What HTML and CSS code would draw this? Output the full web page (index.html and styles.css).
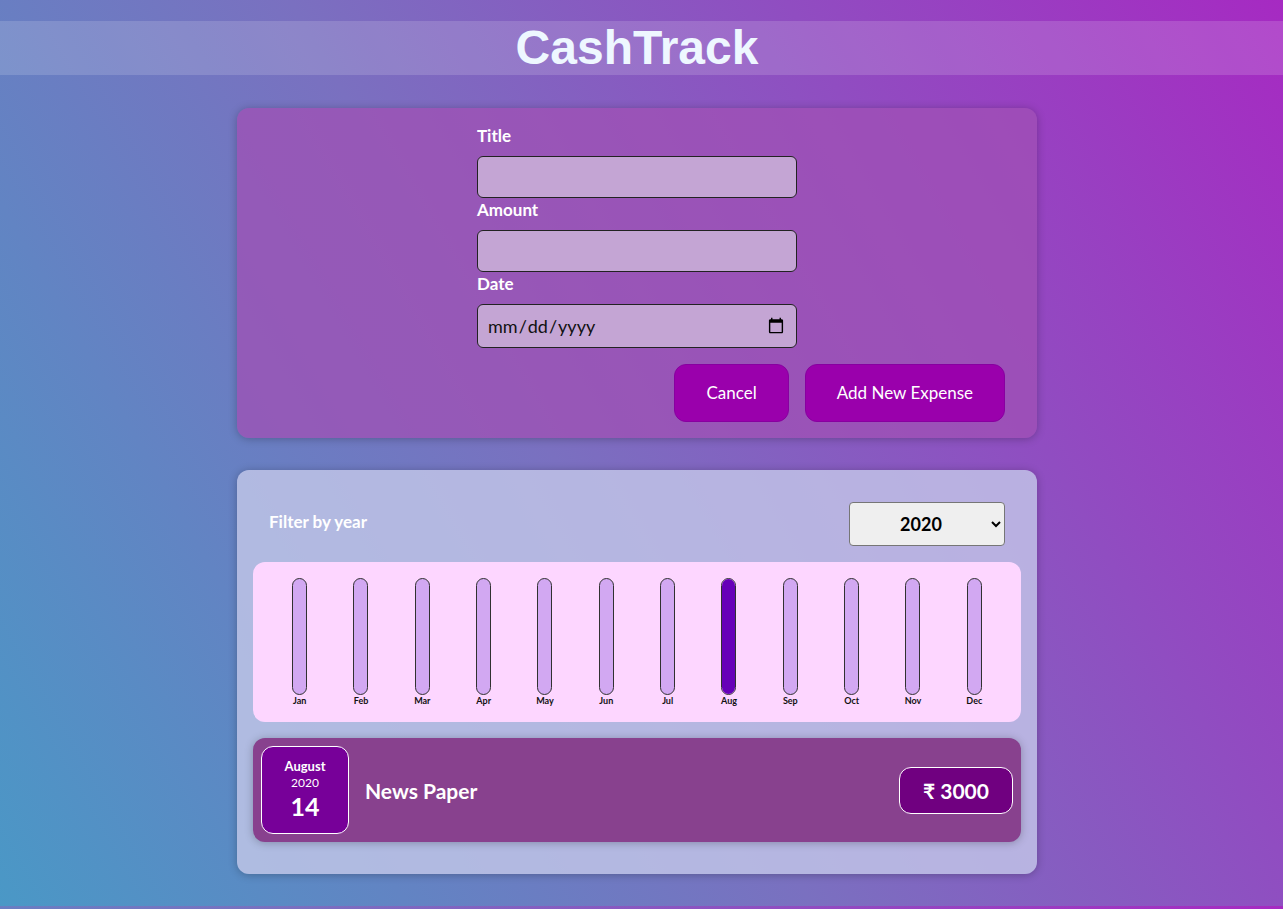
FILE: index.html
```html
<!DOCTYPE html>
<html lang="en">
<head>
<meta charset="utf-8">
<title>CashTrack</title>
<link rel="stylesheet" href="styles.css">
</head>
<body>
<header class="header">
  <h1 class="brand">CashTrack</h1>
</header>
<main class="main">
  <section class="card new-expense">
    <form class="expense-form">
      <div class="controls">
        <div class="control">
          <label class="label">Title</label>
          <input class="field" type="text">
        </div>
        <div class="control">
          <label class="label">Amount</label>
          <input class="field" type="number">
        </div>
        <div class="control">
          <label class="label">Date</label>
          <input class="field field-date" type="date">
        </div>
      </div>
      <div class="actions">
        <button type="button" class="btn">Cancel</button>
        <button type="button" class="btn">Add New Expense</button>
      </div>
    </form>
  </section>

  <section class="card expenses">
    <div class="filter">
      <span class="filter-label">Filter by year</span>
      <select class="filter-select">
        <option>2020</option>
        <option>2021</option>
        <option>2022</option>
      </select>
    </div>
    <div class="chart">
      <div class="chart-col"><div class="bar"><div class="bar-fill"></div></div><span class="bar-label">Jan</span></div>
      <div class="chart-col"><div class="bar"><div class="bar-fill"></div></div><span class="bar-label">Feb</span></div>
      <div class="chart-col"><div class="bar"><div class="bar-fill"></div></div><span class="bar-label">Mar</span></div>
      <div class="chart-col"><div class="bar"><div class="bar-fill"></div></div><span class="bar-label">Apr</span></div>
      <div class="chart-col"><div class="bar"><div class="bar-fill"></div></div><span class="bar-label">May</span></div>
      <div class="chart-col"><div class="bar"><div class="bar-fill"></div></div><span class="bar-label">Jun</span></div>
      <div class="chart-col"><div class="bar"><div class="bar-fill"></div></div><span class="bar-label">Jul</span></div>
      <div class="chart-col"><div class="bar"><div class="bar-fill" style="height:100%"></div></div><span class="bar-label">Aug</span></div>
      <div class="chart-col"><div class="bar"><div class="bar-fill"></div></div><span class="bar-label">Sep</span></div>
      <div class="chart-col"><div class="bar"><div class="bar-fill"></div></div><span class="bar-label">Oct</span></div>
      <div class="chart-col"><div class="bar"><div class="bar-fill"></div></div><span class="bar-label">Nov</span></div>
      <div class="chart-col"><div class="bar"><div class="bar-fill"></div></div><span class="bar-label">Dec</span></div>
    </div>
    <ul class="expense-list">
      <li class="expense-item">
        <div class="expense-date">
          <div class="date-month">August</div>
          <div class="date-year">2020</div>
          <div class="date-day">14</div>
        </div>
        <h2 class="expense-title">News Paper</h2>
        <div class="expense-price">₹ 3000</div>
      </li>
    </ul>
  </section>
</main>
</body>
</html>
```

FILE: styles.css
```css
* { box-sizing: border-box; }

html {
  font-family: "Source Sans Pro", Lato, "Noto Sans", sans-serif;
}

body {
  margin: 0;
  padding-right: 9px;
  background: linear-gradient(60deg, #4a98c6 0%, #7a70c0 45%, #a62ac2 100%);
  color: #fff;
}

.header {
  margin-top: 21px;
  margin-right: -9px;
  padding-right: 9px;
  height: 54px;
  background: rgba(255, 255, 255, 0.15);
  display: flex;
  align-items: center;
  justify-content: center;
}

.brand {
  margin: 0;
  font-family: "Liberation Sans", Arial, sans-serif;
  font-size: 48px;
  font-weight: 700;
  line-height: 54px;
  color: #eef7ff;
}

.main {
  width: 800px;
  margin: 33px auto 0;
  padding-bottom: 32px;
}

.card {
  border-radius: 12px;
  box-shadow: 0 1px 8px rgba(0, 0, 0, 0.25);
}

.new-expense {
  background: rgba(160, 80, 180, 0.75);
  padding: 16px 32px 16px 32px;
}

.controls {
  width: 320px;
  margin: 0 auto;
  display: flex;
  flex-direction: column;
}

.label {
  display: block;
  font-size: 17px;
  font-weight: 700;
  line-height: 24px;
  margin-bottom: 8px;
  color: #fff;
}

.field {
  display: block;
  width: 320px;
  height: 42px;
  background: #c4a5d4;
  border: 1px solid #222;
  border-radius: 6px;
  font: inherit;
  font-size: 18px;
  padding: 0 9px;
  color: #111;
}

.field-date {
  height: 44px;
}

.actions {
  display: flex;
  justify-content: flex-end;
  gap: 16px;
  margin-top: 16px;
}

.btn {
  font: inherit;
  font-size: 17px;
  line-height: 24px;
  padding: 16px 31px;
  background: #9a00ac;
  color: #fff;
  border: 1px solid #8800a0;
  border-radius: 12px;
  cursor: pointer;
}

.expenses {
  margin-top: 32px;
  background: rgba(196, 200, 232, 0.8);
  padding: 16px;
}

.filter {
  display: flex;
  align-items: center;
  justify-content: space-between;
  padding: 0 16px;
  margin: 16px 0;
}

.filter-label {
  font-size: 17px;
  font-weight: 700;
  color: #fff;
  margin-bottom: 6px;
}

.filter-select {
  width: 156px;
  height: 44px;
  background: #efefef;
  border: 1px solid #767676;
  border-radius: 4px;
  font: inherit;
  font-size: 18px;
  font-weight: 700;
  text-align: center;
  color: #000;
}

.chart {
  display: grid;
  grid-template-columns: repeat(12, 1fr);
  padding: 16px 16px 15px;
  background: #fdd6ff;
  border-radius: 12px;
  height: 160px;
}

.chart-col {
  display: flex;
  flex-direction: column;
  align-items: center;
}

.bar {
  height: 117px;
  width: 15px;
  border: 1px solid #313131;
  border-radius: 12px;
  background: #d2a8f2;
  overflow: hidden;
  display: flex;
  flex-direction: column;
  justify-content: flex-end;
}

.bar-fill {
  height: 0;
  background: #6600b8;
}

.bar-label {
  font-size: 9px;
  font-weight: 700;
  line-height: 12px;
  color: #111;
}

.expense-list {
  list-style: none;
  margin: 16px 0 16px;
  padding: 0;
}

.expense-item {
  display: flex;
  align-items: center;
  gap: 16px;
  padding: 8px;
  background: #88418e;
  border-radius: 12px;
  box-shadow: 0 1px 8px rgba(0, 0, 0, 0.25);
}

.expense-date {
  width: 88px;
  height: 88px;
  border: 1px solid #fff;
  border-radius: 12px;
  background: #770099;
  display: flex;
  flex-direction: column;
  align-items: center;
  justify-content: center;
  color: #fff;
}

.date-month {
  font-size: 13px;
  font-weight: 700;
  line-height: 17px;
  margin-top: -2px;
}

.date-year {
  font-size: 12px;
  line-height: 16px;
}

.date-day {
  font-size: 25px;
  font-weight: 700;
  line-height: 30px;
}

.expense-title {
  flex: 1;
  margin: 0;
  font-size: 21px;
  font-weight: 700;
  color: #fff;
}

.expense-price {
  width: 114px;
  height: 47px;
  display: flex;
  align-items: center;
  justify-content: center;
  font-size: 21px;
  font-weight: 700;
  background: #700080;
  border: 1px solid #fff;
  border-radius: 12px;
  color: #fff;
}
```
